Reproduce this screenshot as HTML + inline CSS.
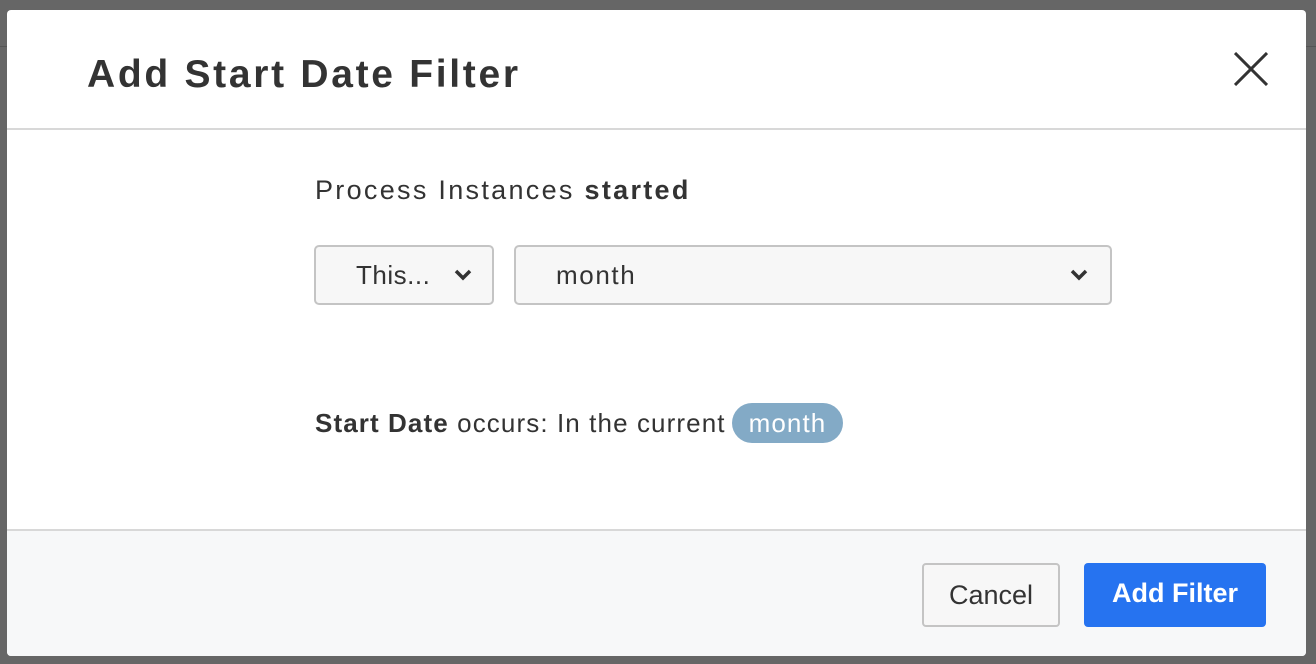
<!DOCTYPE html>
<html><head><style>
body{margin:0;width:1316px;height:664px;background:#666;position:relative;overflow:hidden;font-family:"Liberation Sans",sans-serif;color:#333}
.bgline{position:absolute;background:#555}
.modal{position:absolute;left:7px;top:10px;width:1299px;height:646px;background:#fff;border-radius:4px;overflow:hidden}
.hdr{height:118px;border-bottom:2px solid #d8d8d8;position:relative}
.hdr h1{margin:0;position:absolute;left:80px;top:43px;font-size:39px;font-weight:bold;color:#333;letter-spacing:2.7px}
.x{position:absolute;left:1227px;top:42px}
.lbl{position:absolute;left:308px;top:165px;font-size:27px;letter-spacing:2.3px}
.sel{position:absolute;top:235px;height:60px;border:2px solid #c4c4c4;border-radius:5px;background:#f7f7f7;box-sizing:border-box;font-size:26px;line-height:56px}
.chev{position:absolute;top:22px}
.desc{position:absolute;left:308px;top:393px;font-size:26px;line-height:40px;letter-spacing:1.1px}
.pill{display:inline-block;background:#83aac6;color:#fff;border-radius:20px;padding:0 17px;line-height:40px;margin-left:6px}
.ftr{position:absolute;left:0;top:519px;width:100%;height:127px;background:#f7f8f9;border-top:2px solid #d8d8d8}
.btn{position:absolute;top:32px;height:64px;border-radius:4px;box-sizing:border-box;font-size:27px;line-height:60px;text-align:center}
</style></head><body>
<div class="bgline" style="left:0;top:46px;width:1316px;height:1px"></div>
<div class="modal">
<div class="hdr"><h1>Add Start Date Filter</h1>
<svg class="x" width="34" height="34" viewBox="0 0 34 34"><path d="M1 1L33 33M33 1L1 33" stroke="#333" stroke-width="3"/></svg></div>
<div class="lbl">Process Instances <b>started</b></div>
<div class="sel" style="left:307px;width:180px;padding-left:40px;letter-spacing:0.5px">This...<svg class="chev" style="left:138px" width="18" height="12" viewBox="0 0 18 12"><path d="M2 2L9 9L16 2" stroke="#333" stroke-width="3.5" fill="none"/></svg></div>
<div class="sel" style="left:507px;width:598px;padding-left:40px;letter-spacing:1.6px">month<svg class="chev" style="left:554px" width="18" height="12" viewBox="0 0 18 12"><path d="M2 2L9 9L16 2" stroke="#333" stroke-width="3.5" fill="none"/></svg></div>
<div class="desc"><b>Start Date</b> occurs: In the current<span class="pill">month</span></div>
<div class="ftr">
<div class="btn" style="left:915px;width:138px;border:2px solid #c4c4c4;background:#f7f7f7;color:#333">Cancel</div>
<div class="btn" style="left:1077px;width:182px;background:#2673f0;color:#fff;font-weight:bold">Add Filter</div>
</div>
</div>
</body></html>
